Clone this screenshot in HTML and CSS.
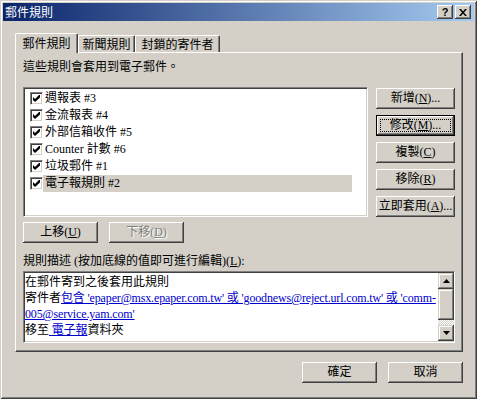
FILE: index.html
```html
<!DOCTYPE html>
<html lang="zh-Hant">
<head>
    <meta charset="UTF-8">
    <title>郵件規則</title>
    <link rel="stylesheet" href="styles.css">
</head>
<body>
<div class="window">
    <div class="titlebar">
        <span class="title">郵件規則</span>
        <div class="caption-btns">
            <span class="cap-btn">?</span>
            <span class="cap-btn">
                <svg width="8" height="7" viewBox="0 0 8 7"><path d="M0 0H2L4 2.4L6 0H8L5 3.5L8 7H6L4 4.6L2 7H0L3 3.5Z"/></svg>
            </span>
        </div>
    </div>

    <div class="dialog">
        <ul class="tabs">
            <li class="tab active">郵件規則</li>
            <li class="tab">新聞規則</li>
            <li class="tab wide">封鎖的寄件者</li>
        </ul>

        <div class="panel">
            <p class="intro">這些規則會套用到電子郵件。</p>

            <div class="rules">
                <ul class="rule-list">
                    <li class="rule"><span class="check"><svg width="7" height="7" viewBox="0 0 7 7"><path d="M0 2L2 4L6 0H7V2.5L2 7L0 5Z"/></svg></span><span class="name">週報表 #3</span></li>
                    <li class="rule"><span class="check"><svg width="7" height="7" viewBox="0 0 7 7"><path d="M0 2L2 4L6 0H7V2.5L2 7L0 5Z"/></svg></span><span class="name">金流報表 #4</span></li>
                    <li class="rule"><span class="check"><svg width="7" height="7" viewBox="0 0 7 7"><path d="M0 2L2 4L6 0H7V2.5L2 7L0 5Z"/></svg></span><span class="name">外部信箱收件 #5</span></li>
                    <li class="rule"><span class="check"><svg width="7" height="7" viewBox="0 0 7 7"><path d="M0 2L2 4L6 0H7V2.5L2 7L0 5Z"/></svg></span><span class="name">Counter 計數 #6</span></li>
                    <li class="rule"><span class="check"><svg width="7" height="7" viewBox="0 0 7 7"><path d="M0 2L2 4L6 0H7V2.5L2 7L0 5Z"/></svg></span><span class="name">垃圾郵件 #1</span></li>
                    <li class="rule selected"><span class="check"><svg width="7" height="7" viewBox="0 0 7 7"><path d="M0 2L2 4L6 0H7V2.5L2 7L0 5Z"/></svg></span><span class="name">電子報規則 #2</span></li>
                </ul>

                <div class="side-btns">
                    <button class="btn">新增(<u>N</u>)...</button>
                    <button class="btn default">修改(<u>M</u>)...</button>
                    <button class="btn">複製(<u>C</u>)</button>
                    <button class="btn">移除(<u>R</u>)</button>
                    <button class="btn">立即套用(<u>A</u>)...</button>
                </div>
            </div>

            <div class="move-btns">
                <button class="btn">上移(<u>U</u>)</button>
                <button class="btn" disabled>下移(<u>D</u>)</button>
            </div>

            <p class="desc-label">規則描述 (按加底線的值即可進行編輯)(<u>L</u>):</p>

            <div class="desc">
                <div class="desc-text">
                    <p>在郵件寄到之後套用此規則</p>
                    <p>寄件者<a href="#">包含 'epaper@msx.epaper.com.tw' 或 'goodnews@reject.url.com.tw' 或 'comm-<br>005@service.yam.com'</a></p>
                    <p>移至<a href="#">&nbsp;電子報</a>資料夾</p>
                </div>
                <div class="scrollbar">
                    <span class="sb-btn"><svg width="7" height="4" viewBox="0 0 7 4"><path d="M3.5 0L7 4H0Z"/></svg></span>
                    <span class="sb-thumb"></span>
                    <span class="sb-track"></span>
                    <span class="sb-btn"><svg width="7" height="4" viewBox="0 0 7 4"><path d="M0 0H7L3.5 4Z"/></svg></span>
                </div>
            </div>
        </div>

        <div class="footer">
            <button class="btn">確定</button>
            <button class="btn">取消</button>
        </div>
    </div>
</div>
</body>
</html>
```

FILE: styles.css
```css
* {
    margin: 0;
    padding: 0;
    box-sizing: border-box;
}

body {
    background: #d4d0c8;
    color: #000;
    font: 12px/14px "Liberation Serif", "Noto Sans CJK TC", serif;
}

/*窗口外框*/
.window {
    width: 477px;
    height: 399px;
    padding: 3px;
    box-shadow: inset 1px 1px #d4d0c8, inset -1px -1px #404040, inset 2px 2px #fff, inset -2px -2px #808080;
}

.titlebar {
    height: 18px;
    display: flex;
    align-items: center;
    justify-content: space-between;
    padding: 0 3px 0 2px;
    background: linear-gradient(to right, #0a246a, #a6caf0);
}

.title {
    color: #fff;
    font: 12px/18px "Noto Sans CJK TC", sans-serif;
}

.caption-btns {
    display: flex;
    gap: 2px;
}

.cap-btn {
    width: 16px;
    height: 14px;
    display: flex;
    align-items: center;
    justify-content: center;
    background: #d4d0c8;
    font: bold 11px/1 "Liberation Sans", sans-serif;
    box-shadow: inset -1px -1px #404040, inset 1px 1px #fff, inset -2px -2px #808080;
}

.dialog {
    padding: 12px 11px 0 12px;
}

/*选项卡*/
.tabs {
    display: flex;
    align-items: flex-end;
    height: 19px;
    list-style: none;
    position: relative;
    z-index: 1;
}

.tab {
    width: 57px;
    height: 17px;
    text-align: center;
    font: 12px/15px "Noto Sans CJK TC", sans-serif;
    border: 1px solid #fff;
    border-right-color: #404040;
    border-bottom: none;
    border-radius: 2px 2px 0 0;
    box-shadow: inset -1px 0 #808080;
}

.tab.active {
    width: 63px;
    height: 20px;
    margin-bottom: -1px;
    line-height: 18px;
    background: #d4d0c8;
}

.tab.wide {
    width: 85px;
}

.panel {
    height: 300px;
    padding: 7px 7px 0;
    border: 1px solid #fff;
    border-right-color: #404040;
    border-bottom-color: #404040;
    box-shadow: inset -1px -1px #808080;
}

.intro {
    height: 14px;
}

.rules {
    display: flex;
    gap: 8px;
    margin-top: 13px;
}

/*下凹的白色框*/
.rule-list,
.desc {
    background: #fff;
    border: 1px solid;
    border-color: #808080 #fff #fff #808080;
    box-shadow: inset 1px 1px #404040, inset -1px -1px #d4d0c8;
}

.rule-list {
    width: 345px;
    height: 130px;
    padding: 2px 0 0 1px;
    list-style: none;
}

.rule {
    display: flex;
    align-items: center;
    height: 17px;
}

.check {
    width: 13px;
    height: 13px;
    margin-left: 5px;
    display: flex;
    align-items: center;
    justify-content: center;
    background: #fff;
    border: 1px solid;
    border-color: #808080 #fff #fff #808080;
    box-shadow: inset 1px 1px #404040, inset -1px -1px #d4d0c8;
}

.name {
    width: 309px;
    height: 17px;
    padding-left: 2px;
    line-height: 17px;
}

.rule.selected .name {
    background: #d4d0c8;
}

.side-btns {
    width: 79px;
    display: flex;
    flex-direction: column;
    gap: 6px;
    margin-top: 1px;
}

/*按钮*/
.btn {
    height: 21px;
    border: none;
    background: #d4d0c8;
    color: #000;
    font: inherit;
    line-height: 19px;
    box-shadow: inset -1px -1px #404040, inset 1px 1px #fff, inset -2px -2px #808080;
    position: relative;
}

.btn.default {
    box-shadow: inset 0 0 0 1px #000, inset -2px -2px #404040, inset 2px 2px #fff, inset -3px -3px #808080;
}

.btn.default::after {
    content: '';
    position: absolute;
    top: 4px;
    left: 4px;
    right: 4px;
    bottom: 4px;
    border: 1px dotted #000;
}

.btn:disabled {
    color: #808080;
    text-shadow: 1px 1px #fff;
}

.move-btns {
    display: flex;
    gap: 11px;
    margin-top: 5px;
}

.move-btns .btn,
.footer .btn {
    width: 75px;
}

.desc-label {
    margin-top: 11px;
    height: 14px;
}

.desc {
    display: flex;
    height: 72px;
    margin-top: 3px;
    padding: 1px 0 1px 1px;
}

.desc-text {
    flex: 1;
    padding-top: 1px;
    line-height: 16px;
    white-space: nowrap;
}

.desc-text a {
    color: #0000cc;
    letter-spacing: -0.15px;
}

.scrollbar {
    width: 16px;
    display: flex;
    flex-direction: column;
}

.sb-btn,
.sb-thumb {
    background: #d4d0c8;
    box-shadow: inset -1px -1px #404040, inset 1px 1px #d4d0c8, inset -2px -2px #808080, inset 2px 2px #fff;
}

.sb-btn {
    height: 16px;
    display: flex;
    align-items: center;
    justify-content: center;
}

.sb-thumb {
    height: 31px;
}

.sb-track {
    flex: 1;
    background: repeating-conic-gradient(#d4d0c8 0 25%, #fff 0 50%) 0 0 / 2px 2px;
}

.footer {
    display: flex;
    justify-content: flex-end;
    gap: 11px;
    margin-top: 10px;
}
```
